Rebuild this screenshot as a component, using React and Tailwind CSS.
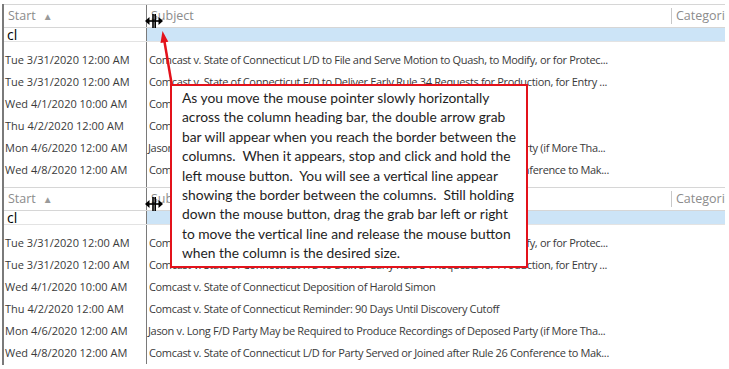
import React from "react";

const ROWS_TOP = [
  ["Tue 3/31/2020 12:00 AM", "Comcast v. State of Connecticut L/D to File and Serve Motion to Quash, to Modify, or for Protec..."],
  ["Tue 3/31/2020 12:00 AM", "Comcast v. State of Connecticut F/D to Deliver Early Rule 34 Requests for Production, for Entry ..."],
  ["Wed 4/1/2020 10:00 AM", "Comcast v. State of Connecticut Deposition of Harold Simon"],
  ["Thu 4/2/2020 12:00 AM", "Comcast v. State of Connecticut Reminder: 90 Days Until Discovery Cutoff"],
  ["Mon 4/6/2020 12:00 AM", "Jason v. Long F/D Party May be Required to Produce Recordings of Deposed Party (if More Tha..."],
  ["Wed 4/8/2020 12:00 AM", "Comcast v. State of Connecticut L/D for Party Served or Joined after Rule 26 Conference to Mak..."],
];

const CALLOUT = [
  "As you move the mouse pointer slowly horizontally",
  "across the column heading bar, the double arrow grab",
  "bar will appear when you reach the border between the",
  "columns.  When it appears, stop and click and hold the",
  "left mouse button.  You will see a vertical line appear",
  "showing the border between the columns.  Still holding",
  "down the mouse button, drag the grab bar left or right",
  "to move the vertical line and release the mouse button",
  "when the column is the desired size.",
];

const ResizeCursor = ({ className }) => (
  <svg className={className} width="18" height="14" viewBox="0 0 18 14">
    <rect x="7.2" y="0" width="1.6" height="14" fill="#000" />
    <rect x="9.4" y="0" width="1.6" height="14" fill="#000" />
    <rect x="2" y="6.2" width="14" height="1.6" fill="#000" />
    <polygon points="0,7 4.5,3 4.5,11" fill="#000" />
    <polygon points="18,7 13.5,3 13.5,11" fill="#000" />
  </svg>
);

const Section = () => (
  <div>
    {/* column heading bar */}
    <div className="flex h-[24px] border-y border-[#d6d6d6]">
      <div className="w-[143px] shrink-0 border-r border-[#7a7a7a] flex items-center pl-[4px] text-[12.5px] text-[#8c8c8c]">
        Start <span className="ml-[7px] text-[10px] text-[#9a9a9a]">▲</span>
      </div>
      <div className="flex-1 flex items-center pl-[4px] text-[12.5px] text-[#8c8c8c]">
        <span className="flex-1">Subject</span>
        <span className="h-[16px] border-l border-[#c8c8c8] pl-[4px] w-[54px] overflow-hidden whitespace-nowrap leading-[16px]">
          Categories
        </span>
      </div>
    </div>
    {/* filter row */}
    <div className="flex h-[14px] border-b border-[#e3e3e3]">
      <div className="w-[143px] shrink-0 border-r border-[#7a7a7a] pl-[3px] text-[14px] leading-[14px] text-black">
        cl
      </div>
      <div className="flex-1 bg-[#cce4f7]" />
    </div>
    <div className="flex h-[7px]">
      <div className="w-[143px] shrink-0 border-r border-[#7a7a7a]" />
    </div>
    {ROWS_TOP.map(([date, subject], i) => (
      <div key={i} className="flex h-[22px] items-center text-[11px] text-[#3a3a3a]">
        <div className="w-[143px] shrink-0 h-full flex items-center border-r border-[#7a7a7a] pl-[1px] whitespace-nowrap">
          {date}
        </div>
        <div
          className={`flex-1 whitespace-nowrap overflow-hidden tracking-[-0.34px] ${
            subject.startsWith("Jason") ? "pl-[1px]" : "pl-[2px]"
          }`}
        >
          {subject}
        </div>
      </div>
    ))}
  </div>
);

export default function App() {
  return (
    <div
      className="relative w-[729px] h-[369px] bg-white overflow-hidden pt-[4px]"
      style={{ fontFamily: '"Open Sans", "Noto Sans", sans-serif' }}
    >
      <div className="ml-[2px] w-[723px] border-l-2 border-[#7a7a7a] h-[361px]">
        <Section />
        <div className="flex h-[6px]">
          <div className="w-[143px] shrink-0 border-r border-[#7a7a7a]" />
        </div>
        <Section />
      </div>

      <ResizeCursor className="absolute left-[145px] top-[14px]" />
      <ResizeCursor className="absolute left-[145px] top-[197px]" />

      {/* callout */}
      <div
        className="absolute left-[170px] top-[84px] w-[358px] h-[184px] border-2 border-[#e3121b] bg-white pl-[10px] pt-[2px] text-[13.8px] leading-[19.4px] text-[#1e1e1e] whitespace-pre"
        style={{ fontFamily: "Lato, sans-serif" }}
      >
        {CALLOUT.map((l, i) => (
          <div key={i}>{l}</div>
        ))}
      </div>

      {/* pointer arrow */}
      <svg className="absolute left-0 top-0 pointer-events-none" width="729" height="369">
        <line x1="164.2" y1="40" x2="172" y2="86" stroke="#e3121b" strokeWidth="2.5" />
        <polygon points="162.5,31 168.3,41.8 160.5,43" fill="#e3121b" />
      </svg>
    </div>
  );
}
